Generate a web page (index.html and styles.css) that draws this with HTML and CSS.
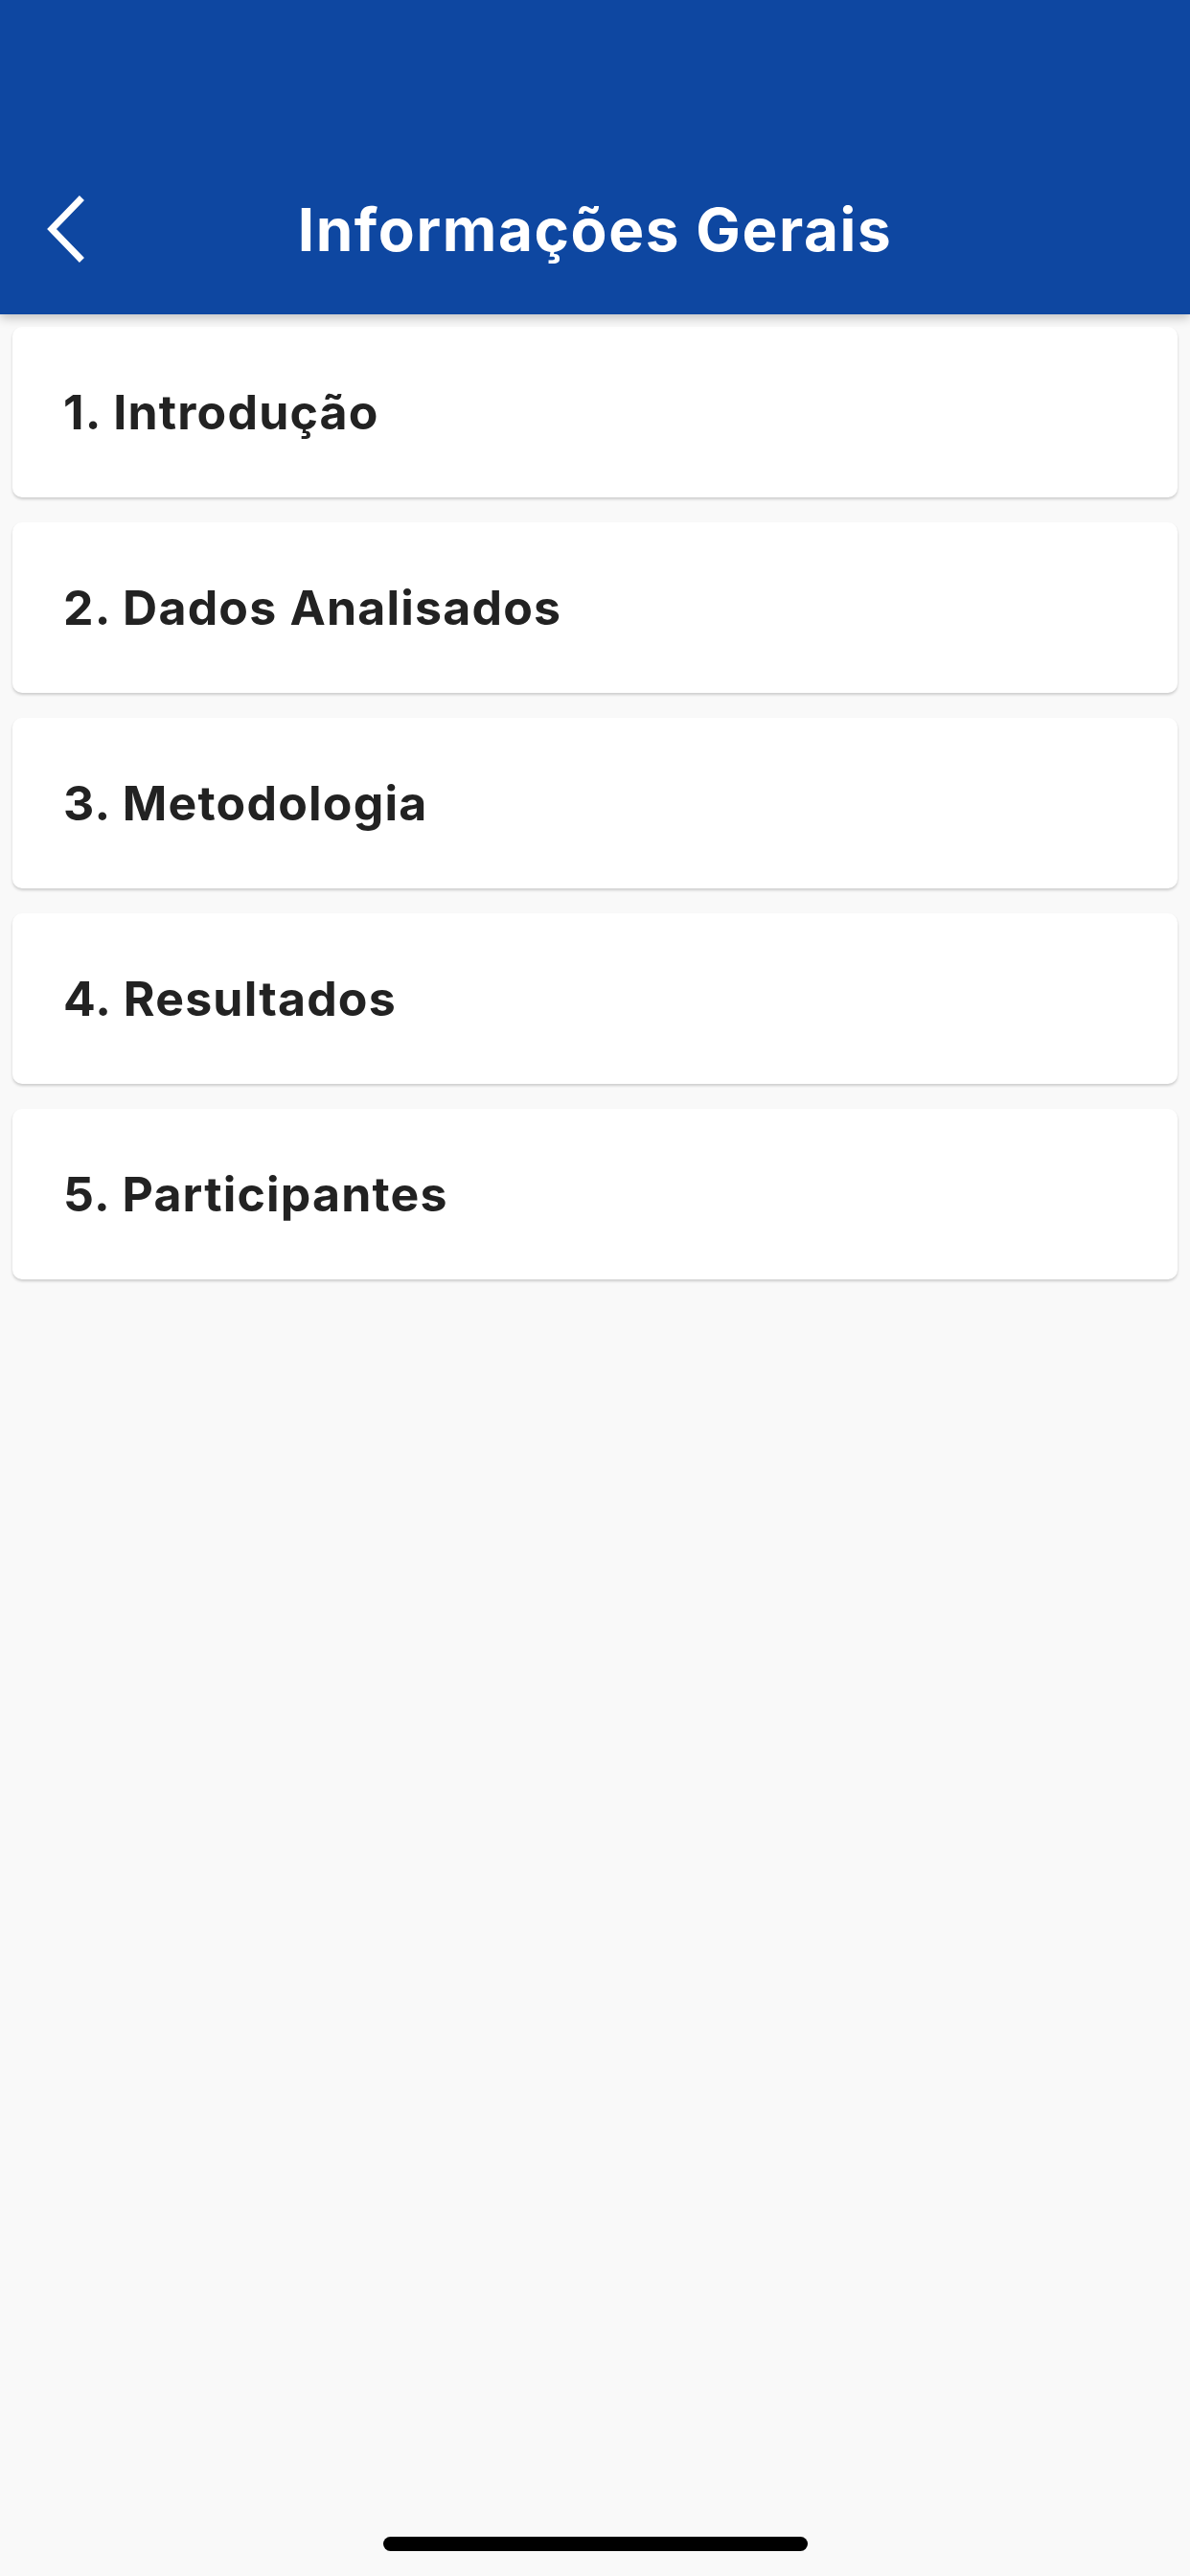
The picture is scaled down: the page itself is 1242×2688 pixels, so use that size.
FILE: index.html
```html
<!DOCTYPE html>
<html lang="pt-BR">
<head>
  <meta charset="UTF-8" />
  <meta name="viewport" content="width=device-width, initial-scale=1.0" />
  <title>Informações Gerais</title>
  <link rel="stylesheet" href="styles.css">
</head>
<body>
  <div class="screen">
    <header class="topbar">
      <div class="nav">
        <button class="back-btn" aria-label="Voltar">
          <svg width="44" height="70" viewBox="0 0 44 70">
            <polyline points="35,5 6,35 35,65" fill="none" stroke="#fff" stroke-width="7" stroke-linecap="square" stroke-linejoin="miter"/>
          </svg>
        </button>
        <h1 class="title">Informações Gerais</h1>
      </div>
    </header>

    <main class="sections">
      <div class="section-card">1. Introdução</div>
      <div class="section-card">2. Dados Analisados</div>
      <div class="section-card">3. Metodologia</div>
      <div class="section-card">4. Resultados</div>
      <div class="section-card">5. Participantes</div>
    </main>

    <footer class="home-area">
      <div class="home-indicator"></div>
    </footer>
  </div>
</body>
</html>
```

FILE: styles.css
```css
body {
  font-family: Inter, "Noto Sans", Arial, sans-serif;
  background-color: #f9f9f9;
  color: #222;
  margin: 0;
  padding: 0;
}
.screen {
  height: 2688px;
  display: flex;
  flex-direction: column;
}
.topbar {
  background-color: #0e47a1;
  height: 328px;
  box-sizing: border-box;
  padding-top: 150px;
  box-shadow: 0 4px 10px rgba(0, 0, 0, 0.22);
  position: relative;
  z-index: 2;
}
.nav {
  height: 178px;
  display: flex;
  align-items: center;
  justify-content: center;
  position: relative;
}
.back-btn {
  position: absolute;
  left: 48px;
  top: 54px;
  background: none;
  border: none;
  padding: 0;
  width: 44px;
  height: 70px;
  cursor: pointer;
}
.title {
  margin: 0;
  color: #fff;
  font-size: 62px;
  font-weight: 700;
  letter-spacing: 1.6px;
}
.sections {
  flex: 1;
  display: flex;
  flex-direction: column;
  gap: 26px;
  padding: 13px 13px;
}
.section-card {
  background: #fff;
  height: 178px;
  border-radius: 10px;
  box-shadow: 0 2px 3px rgba(0, 0, 0, 0.18);
  display: flex;
  align-items: center;
  padding-left: 53px;
  font-size: 50px;
  font-weight: 700;
  letter-spacing: 1.2px;
  color: #222;
}
.home-area {
  height: 41px;
  display: flex;
  justify-content: center;
}
.home-indicator {
  width: 443px;
  height: 15px;
  border-radius: 8px;
  background: #000;
}
```
